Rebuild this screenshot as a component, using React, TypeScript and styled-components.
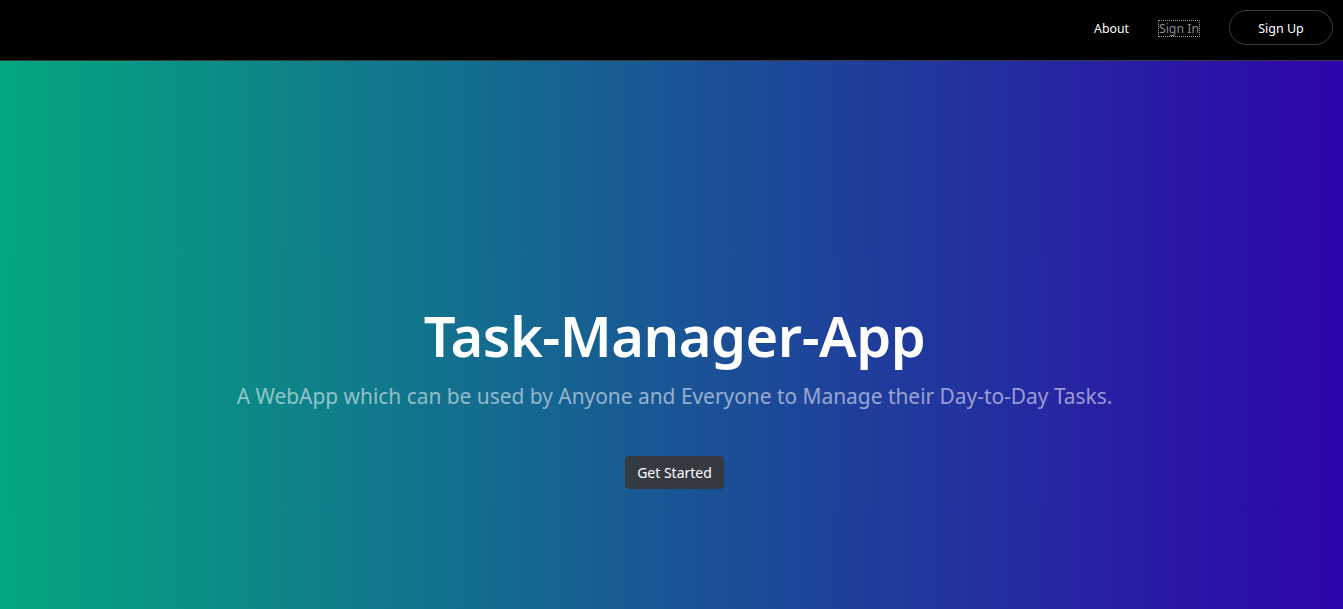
import React from "react";
import styled, { createGlobalStyle } from "styled-components";

const Global = createGlobalStyle`
  html, body { margin: 0; padding: 0; background: #000; }
  body { font-family: "Noto Sans", "Open Sans", sans-serif; }
  * { box-sizing: border-box; }
`;

const Page = styled.div`
  width: 100%;
  height: 609px;
  display: flex;
  flex-direction: column;
  overflow: hidden;
`;

const Nav = styled.nav`
  height: 61px;
  flex: none;
  background: #000;
  border-bottom: 1px solid #3a3a3a;
  display: flex;
  align-items: flex-start;
  justify-content: flex-end;
  padding: 10px 10px 0 0;
`;

const NavLink = styled.a<{ $muted?: boolean }>`
  font-size: 12.3px;
  color: ${(p) => (p.$muted ? "#8a8a8a" : "#fff")};
  text-decoration: none;
  margin-right: 30px;
  margin-top: 11px;
  padding: 0;
  outline: ${(p) => (p.$muted ? "1px dotted #9a9a9a" : "none")};
  line-height: 15px;
`;

const PillButton = styled.button`
  width: 104px;
  height: 35px;
  border-radius: 18px;
  border: 1px solid #3d3d3d;
  background: transparent;
  color: #fff;
  font-family: inherit;
  font-size: 12.5px;
  padding-top: 2px;
`;

const Hero = styled.main`
  flex: 1;
  background: linear-gradient(90deg, #04a77f 0%, #2e04ab 100%);
  display: flex;
  flex-direction: column;
  align-items: center;
  padding: 234px 0 0 6px;
`;

const Title = styled.h1`
  margin: 0;
  font-size: 56px;
  font-weight: 600;
  color: #fff;
  line-height: 80px;
  letter-spacing: -0.5px;
`;

const Lead = styled.p`
  margin: 0;
  margin-top: 6px;
  font-size: 20.9px;
  color: rgba(255, 255, 255, 0.55);
  line-height: 30px;
`;

const Cta = styled.button`
  margin-top: 45px;
  height: 33px;
  padding: 0 12px;
  border: none;
  border-radius: 4px;
  background: #343a40;
  color: #fff;
  font-family: inherit;
  font-size: 14px;
`;

export default function App() {
  return (
    <Page>
      <Global />
      <Nav>
        <NavLink href="#">About</NavLink>
        <NavLink href="#" $muted>Sign In</NavLink>
        <PillButton>Sign Up</PillButton>
      </Nav>
      <Hero>
        <Title>Task-Manager-App</Title>
        <Lead>A WebApp which can be used by Anyone and Everyone to Manage their Day-to-Day Tasks.</Lead>
        <Cta>Get Started</Cta>
      </Hero>
    </Page>
  );
}
